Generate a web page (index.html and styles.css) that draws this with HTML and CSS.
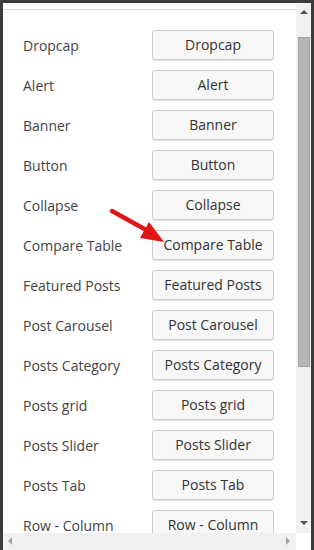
FILE: index.html
```html
<!DOCTYPE html>
<html lang="en">
<head>
    <meta charset="UTF-8">
    <meta name="viewport" content="width=device-width, initial-scale=1.0">
    <title>Shortcodes</title>
    <link rel="stylesheet" href="styles.css">
</head>
<body>
    <div class="window">
        <div class="content">
            <div class="panel">
                <!-- Shortcode list -->
                <div class="row"><span class="label">Dropcap</span><button class="btn">Dropcap</button></div>
                <div class="row"><span class="label">Alert</span><button class="btn">Alert</button></div>
                <div class="row"><span class="label">Banner</span><button class="btn">Banner</button></div>
                <div class="row"><span class="label">Button</span><button class="btn">Button</button></div>
                <div class="row"><span class="label">Collapse</span><button class="btn">Collapse</button></div>
                <div class="row"><span class="label">Compare Table</span><button class="btn">Compare Table</button></div>
                <div class="row"><span class="label">Featured Posts</span><button class="btn">Featured Posts</button></div>
                <div class="row"><span class="label">Post Carousel</span><button class="btn">Post Carousel</button></div>
                <div class="row"><span class="label">Posts Category</span><button class="btn">Posts Category</button></div>
                <div class="row"><span class="label">Posts grid</span><button class="btn">Posts grid</button></div>
                <div class="row"><span class="label">Posts Slider</span><button class="btn">Posts Slider</button></div>
                <div class="row"><span class="label">Posts Tab</span><button class="btn">Posts Tab</button></div>
                <div class="row"><span class="label">Row - Column</span><button class="btn">Row - Column</button></div>
            </div>
        </div>

        <!-- Fake scrollbars -->
        <div class="vscroll">
            <span class="arrow-up"></span>
            <span class="thumb"></span>
            <span class="arrow-down"></span>
        </div>
        <div class="hscroll">
            <span class="arrow-left"></span>
            <span class="arrow-right"></span>
        </div>
        <div class="corner"></div>
    </div>

    <svg class="pointer" width="314" height="550" viewBox="0 0 314 550">
        <line x1="112" y1="211" x2="148" y2="231" stroke="#e01515" stroke-width="4.5" stroke-linecap="round"/>
        <polygon points="164,242 140,238 149,222" fill="#e01515"/>
    </svg>
</body>
</html>
```

FILE: styles.css
```css
body {
    margin: 0;
    background-color: #3c3c3c;
    font-family: "Open Sans", Arial, sans-serif;
    position: relative;
    height: 550px;
    overflow: hidden;
}

.window {
    margin: 3px 3px 0 3px;
    height: 547px;
    background: #fff;
    display: grid;
    grid-template-columns: 1fr 15px;
    grid-template-rows: 1fr 17px;
}

.content {
    overflow: hidden;
}

.panel {
    margin-top: 6px;
    border-top: 1px solid #dcdcdc;
    padding: 20px 0 0 20px;
    display: flex;
    flex-direction: column;
    gap: 10px;
}

.row {
    display: flex;
    align-items: center;
    height: 30px;
}

.label {
    width: 129px;
    font-size: 14px;
    color: #444;
    padding-top: 1px;
}

.btn {
    width: 122px;
    height: 30px;
    padding: 0 0 1px;
    font-family: inherit;
    font-size: 14px;
    color: #333;
    background: #f7f7f7;
    border: 1px solid #cccccc;
    border-radius: 3px;
    box-shadow: 0 1px 0 #e6e6e6;
}

/* scrollbars */
.vscroll {
    background: #f1f1f1;
    position: relative;
}

.thumb {
    position: absolute;
    left: 2px;
    right: 1px;
    top: 34px;
    height: 330px;
    background: #b4b4b4;
    border: 1px solid #a3a3a3;
    box-sizing: border-box;
}

.arrow-up,
.arrow-down {
    position: absolute;
    left: 4px;
    width: 0;
    height: 0;
    border-left: 4px solid transparent;
    border-right: 4px solid transparent;
}

.arrow-up {
    top: 7px;
    border-bottom: 4px solid #505050;
}

.arrow-down {
    bottom: 8px;
    border-top: 4px solid #505050;
}

.hscroll {
    background: #f1f1f1;
    position: relative;
}

.arrow-left,
.arrow-right {
    position: absolute;
    top: 4px;
    width: 0;
    height: 0;
    border-top: 4px solid transparent;
    border-bottom: 4px solid transparent;
}

.arrow-left {
    left: 5px;
    border-right: 4px solid #a3a3a3;
}

.arrow-right {
    right: 6px;
    border-left: 4px solid #a3a3a3;
}

.corner {
    background: #fff;
}

.pointer {
    position: absolute;
    left: 0;
    top: 0;
}
```
